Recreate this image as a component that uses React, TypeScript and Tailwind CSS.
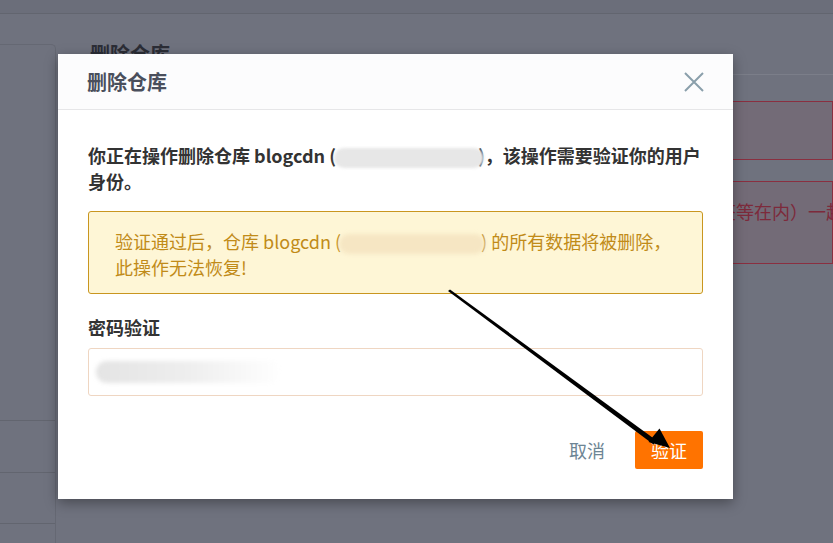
import React from 'react';

const font = { fontFamily: '"Noto Sans CJK SC", "Noto Sans", sans-serif' };

const Backdrop: React.FC = () => (
  <div className="absolute inset-0 bg-[#6f727e]">
    <div className="h-[14px] bg-[#6b6e7a] border-b border-[#62656f]"></div>
    <div className="flex pt-[30px] h-[529px]">
      {/* left list */}
      <div className="w-[56px] shrink-0 border-t border-r border-[#656873] rounded-tr-[5px] flex flex-col">
        <div className="h-[375px] shrink-0"></div>
        <div className="h-[52px] shrink-0 border-t border-[#62656f]"></div>
        <div className="h-[51px] shrink-0 border-t border-[#62656f]"></div>
        <div className="h-[30px] shrink-0 border-t border-[#62656f]"></div>
      </div>
      {/* main content */}
      <div className="flex-1 pl-[34px] -mt-[4px] overflow-hidden">
        <div className="text-[20px] font-bold leading-[28px] text-[#2b2d36]">删除仓库</div>
        <div className="mt-[6px] border-t border-[#7b7e89]"></div>
        <div className="mt-[26px] h-[59px] border border-[#8a2f40] bg-[#736b77]"></div>
        <div className="mt-[21px] h-[83px] border border-[#8a2f40] bg-[#736b77] pl-[33px] pt-[16px] text-[18px] leading-[26px] text-[#7d2a3b] whitespace-nowrap">
          请注意，此操作将删除仓库内的所有数据（包括代码、提交记录、分支与标签等在内）一起删除
        </div>
      </div>
    </div>
  </div>
);

const Arrow: React.FC = () => (
  <svg className="absolute inset-0 pointer-events-none" width="833" height="543" viewBox="0 0 833 543">
    <polygon points="448,291 450,289.5 656.5,440.5 653.5,444.5" fill="#000" />
    <polygon points="670,448 648.5,442 659.5,428.5" fill="#000" />
  </svg>
);

export default function App() {
  return (
    <div className="relative w-[833px] h-[543px] overflow-hidden" style={font}>
      <Backdrop />

      <div className="absolute left-[58px] top-[54px] w-[675px] bg-white shadow-[0_4px_12px_rgba(0,0,0,0.35)]">
        <div className="h-[56px] bg-[#fcfcfd] border-b border-[#e6e6e8] px-[29px] flex items-center justify-between">
          <span className="text-[20px] font-bold text-[#4a4f5c]">删除仓库</span>
          <svg width="22" height="22" viewBox="0 0 22 22" className="mr-[-1px]">
            <path d="M2 2 L20 20 M20 2 L2 20" stroke="#8a9fab" strokeWidth="2" />
          </svg>
        </div>

        <div className="px-[30px] pt-[32px] pb-[30px]">
          <p className="text-[18px] font-bold leading-[26px] text-[#333333]">
            <span className="whitespace-nowrap">
              你正在操作删除仓库 blogcdn (
              <span className="inline-block -ml-[2px] w-[150px] h-[20px] align-middle rounded-full bg-[#e7e7e7] blur-[1.5px]"></span>
              <span className="-ml-[6px]">)，该操作需要验证你的用户</span>
            </span>
            <br />
            身份。
          </p>

          <div className="mt-[17px] border border-[#c9961f] rounded-[3px] bg-[#fef6d6] pl-[26px] pt-[16px] pb-[13px] text-[18px] leading-[26px] text-[#c18b18]">
            <span className="whitespace-nowrap">
              验证通过后，仓库 blogcdn (
              <span className="inline-block -ml-[2px] w-[146px] h-[20px] align-middle rounded-full bg-[#f6e6c3] blur-[2px]"></span>
              <span className="-ml-[4px]">) 的所有数据将被删除，</span>
            </span>
            <br />
            此操作无法恢复!
          </div>

          <div className="mt-[20px] text-[18px] font-bold leading-[26px] text-[#333333]">密码验证</div>
          <div className="mt-[8px] h-[48px] border border-[#efd6c2] rounded-[3px] flex items-center pl-[7px]">
            <span className="w-[185px] h-[22px] rounded-full bg-gradient-to-r from-[#e4e4e4] via-[#eeeeee] to-white blur-[2px]"></span>
          </div>

          <div className="mt-[35px] flex items-center justify-end">
            <button className="mr-[30px] text-[18px] text-[#6d8594]">取消</button>
            <button className="w-[68px] h-[38px] rounded-[2px] bg-[#ff7300] text-[18px] text-white">验证</button>
          </div>
        </div>
      </div>

      <Arrow />
    </div>
  );
}
